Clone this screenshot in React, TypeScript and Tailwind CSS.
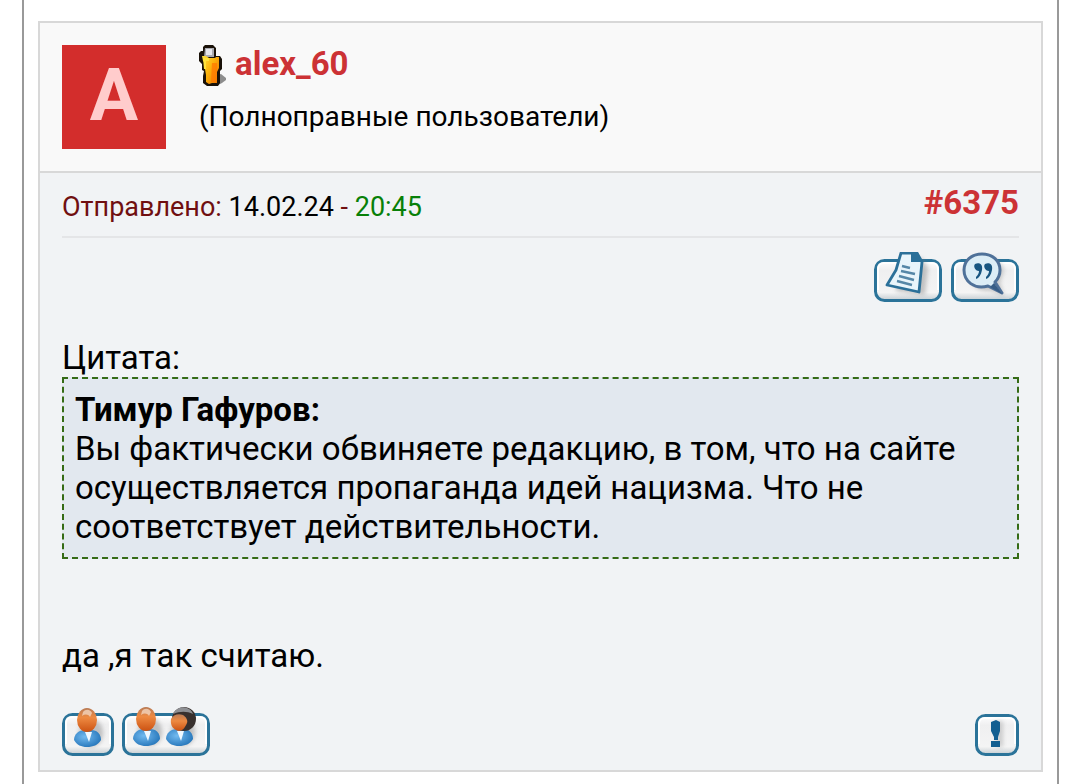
import type { ReactNode } from 'react';

function MemberIcon() {
  return (
    <svg width="28" height="42" viewBox="0 0 28 42" className="shrink-0" aria-hidden="true">
      <defs>
        <linearGradient id="member" x1="0" y1="0" x2="1" y2="0.8">
          <stop offset="0" stopColor="#ffe23c" />
          <stop offset="0.5" stopColor="#fcb40c" />
          <stop offset="1" stopColor="#f07800" />
        </linearGradient>
      </defs>
      <path d="M18 30l4-1 5 4v2l-4 3-4 2h-3z" fill="#8d8d8d" />
      <path d="M6 0h8l3 3v8h4l2 3v10l-2 2v12l-2 3H8l-4-3v-7l1-5-2-1V19l-3-3V8l2-2h2V2z" fill="#1a1209" />
      <path d="M6 3h9v9H5z" fill="#a9aab0" />
      <path d="M7 4h6v6H7z" fill="#e6e6ec" />
      <path d="M3 11h4l3 2h6l1-1h3v11l-2 4v11h-5l-3 1-3-2v-7l-1-6V18l-2-2z" fill="url(#member)" />
      <path d="M13 18h5v6l-1 13h-5z" fill="#ff7a00" opacity="0.75" />
      <path d="M4 13h6v3H7v8H5z" fill="#ffe23c" />
    </svg>
  );
}

// Shared rounded plate under every toolbar picture
function Plate({ width, height = 50, top, children }: { width: number; height?: number; top: number; children: ReactNode }) {
  return (
    <svg width={width} height={height} viewBox={`0 0 ${width} ${height}`} className="block" aria-hidden="true">
      <defs>
        <linearGradient id={`plate${width}`} x1="0" y1="0" x2="0" y2="1">
          <stop offset="0" stopColor="#ffffff" />
          <stop offset="0.25" stopColor="#efeff0" />
          <stop offset="0.8" stopColor="#f4f4f4" />
          <stop offset="1" stopColor="#c3cbd0" />
        </linearGradient>
        <linearGradient id={`skin${width}`} x1="0" y1="0" x2="0" y2="1">
          <stop offset="0" stopColor="#b87a55" />
          <stop offset="0.4" stopColor="#ee8a42" />
          <stop offset="1" stopColor="#cc5212" />
        </linearGradient>
        <radialGradient id={`shirt${width}`} cx="0.4" cy="0.4" r="0.65">
          <stop offset="0" stopColor="#72baf0" />
          <stop offset="1" stopColor="#2676ba" />
        </radialGradient>
        <filter id={`soft${width}`} x="-40%" y="-40%" width="180%" height="180%">
          <feGaussianBlur stdDeviation="2" />
        </filter>
      </defs>
      <rect x="1.5" y={top + 1.5} width={width - 3} height={height - top - 3} rx="9" fill={`url(#plate${width})`} stroke="#2b7399" strokeWidth="3" />
      <path d={`M4 ${height - 12}V${top + 10}q0-6 6-6H${width - 10}q6 0 6 6V${height - 12}`} fill="none" stroke="#fff" strokeWidth="2" />
      {children}
    </svg>
  );
}

function Person({ x, id, dark }: { x: number; id: number; dark?: boolean }) {
  return (
    <g transform={`translate(${x} 0)`}>
      <ellipse cx="17" cy="26" rx="12" ry="14" fill="#777" opacity="0.4" filter={`url(#soft${id})`} />
      <path d="M0 33C0 27 5 23 11 23h6c6 0 10 4 10 10-3 5-8 7-14 7S3 38 0 33z" fill={`url(#shirt${id})`} />
      <path d="M11 25l4 10 3-10z" fill="#eff8ff" />
      {dark ? (
        <>
          <circle cx="18" cy="13" r="12" fill="#38302e" />
          <path d="M7 8c3-6 9-8 14-6 3 1 5 3 6 6-6-3-13-3-20 0z" fill="#8e8f93" />
          <path d="M5 13c2-4 7-6 12-4 3 2 5 5 4 8-2 5-5 8-8 8-6-1-9-6-8-12z" fill={`url(#skin${id})`} />
        </>
      ) : (
        <>
          <ellipse cx="13" cy="13" rx="10" ry="12" fill={`url(#skin${id})`} />
          <path d="M9 5c3-4 8-2 9 1l-2 4c-2-3-5-3-8-1z" fill="#f4d4bd" opacity="0.8" />
        </>
      )}
    </g>
  );
}

function ToolButton({ label, children }: { label: string; children: ReactNode }) {
  return (
    <button type="button" aria-label={label} className="block cursor-pointer">
      {children}
    </button>
  );
}

export default function App() {
  return (
    <div className="ml-[22px] mr-[9px] min-h-screen border-x-2 border-[#999] bg-white px-3.5 pt-[21px] pb-3 font-[Roboto,sans-serif] text-[33px] leading-[39px] text-black">
      <article className="border-2 border-[#d8d8d8] bg-[#f1f3f5]">
        <header className="flex gap-[33px] border-b-2 border-[#d8d8d8] bg-[#f9f9f9] p-[22px]">
          <div className="flex size-[104px] shrink-0 justify-center bg-[#d32d2c] text-[72px] leading-[102px] font-bold text-[#ffcccc]">A</div>
          <div>
            <div className="flex gap-2">
              <MemberIcon />
              <a href="#alex_60" className="leading-[37px] font-bold text-[#cc3235]">alex_60</a>
            </div>
            <p className="mt-3 text-[28px] leading-9">(Полноправные пользователи)</p>
          </div>
        </header>

        <div className="px-[22px] pb-3.5">
          <div className="flex justify-between border-b-2 border-[#e4e5e7] pt-2.5 pb-3.5">
            <p className="pt-2.5 text-[27px] leading-7 text-[#700f10]">
              Отправлено: <span className="text-black">14.02.24</span> - <span className="text-[#088008]">20:45</span>
            </p>
            <a href="#6375" className="font-bold text-[#cc3235]">#6375</a>
          </div>

          <div className="mt-3.5 flex justify-end gap-[9px]">
            <ToolButton label="Ответить">
              <Plate width={68} top={7}>
                <path d="M27 6h21l6 10-3 27-29-4z" fill="#777" opacity="0.4" filter="url(#soft68)" />
                <path d="M27 1h16l5 9-3 30-32-7 9-15z" fill="#e9f5fb" stroke="#2b7099" strokeWidth="2.8" strokeLinejoin="round" />
                <path d="M37 1v9h12L43 0z" fill="#2b7099" />
                <path d="M28 14l8 2M27 19l14 3M25 24l15 4M23 29l15 4" fill="none" stroke="#5687a7" strokeWidth="2.4" />
              </Plate>
            </ToolButton>
            <ToolButton label="Цитировать">
              <Plate width={68} top={7}>
                <path d="M18 15c6-14 30-14 35 3l-4 13 4 13-14-5c-14 1-22-8-21-24z" fill="#777" opacity="0.35" filter="url(#soft68)" />
                <path d="M31 2c11 0 18 7 18 16 0 5-2 9-5 12l7 11-14-7c-14 4-24-5-24-16C13 9 20 2 31 2z" fill="#dcedf6" stroke="#4f7199" strokeWidth="3" strokeLinejoin="round" />
                <path d="M43 31l8 11-12-7z" fill="#375d86" />
                <path d="M24 12c5-2 8 1 7 6-1 5-3 8-6 9v-2c2-2 3-4 3-6-4 0-6-5-4-7zM34 12c5-2 8 1 7 6-1 5-3 8-6 9v-2c2-2 3-4 3-6-4 0-6-5-4-7z" fill="#175580" />
              </Plate>
            </ToolButton>
          </div>

          <div className="mt-9">Цитата:</div>
          <blockquote className="border-2 border-dashed border-[#356b16] bg-[#e2e8ef] px-[11px] py-[11px]">
            <b>Тимур Гафуров:</b>
            <p>Вы фактически обвиняете редакцию, в том, что на сайте осуществляется пропаганда идей нацизма. Что не соответствует действительности.</p>
          </blockquote>

          <p className="mt-[77px]">да ,я так считаю.</p>

          <footer className="mt-[31px] flex items-end gap-2">
            <ToolButton label="Профиль">
              <Plate width={52} top={7}>
                <g transform="translate(0 1)">
                  <Person x={12} id={52} />
                </g>
              </Plate>
            </ToolButton>
            <ToolButton label="Добавить в друзья">
              <Plate width={88} top={7}>
                <Person x={11} id={88} />
                <Person x={44} id={88} dark />
              </Plate>
            </ToolButton>
            <div className="ml-auto">
              <ToolButton label="Пожаловаться">
                <Plate width={44} height={42} top={0}>
                  <path d="M20 7h8v26h-6z" fill="#777" opacity="0.3" filter="url(#soft44)" />
                  <path d="M16 8l5-2 4 2v9l-2 6v3h-4v-3l-3-6zM16 27h9v6h-9z" fill="#145f91" />
                </Plate>
              </ToolButton>
            </div>
          </footer>
        </div>
      </article>
    </div>
  );
}
